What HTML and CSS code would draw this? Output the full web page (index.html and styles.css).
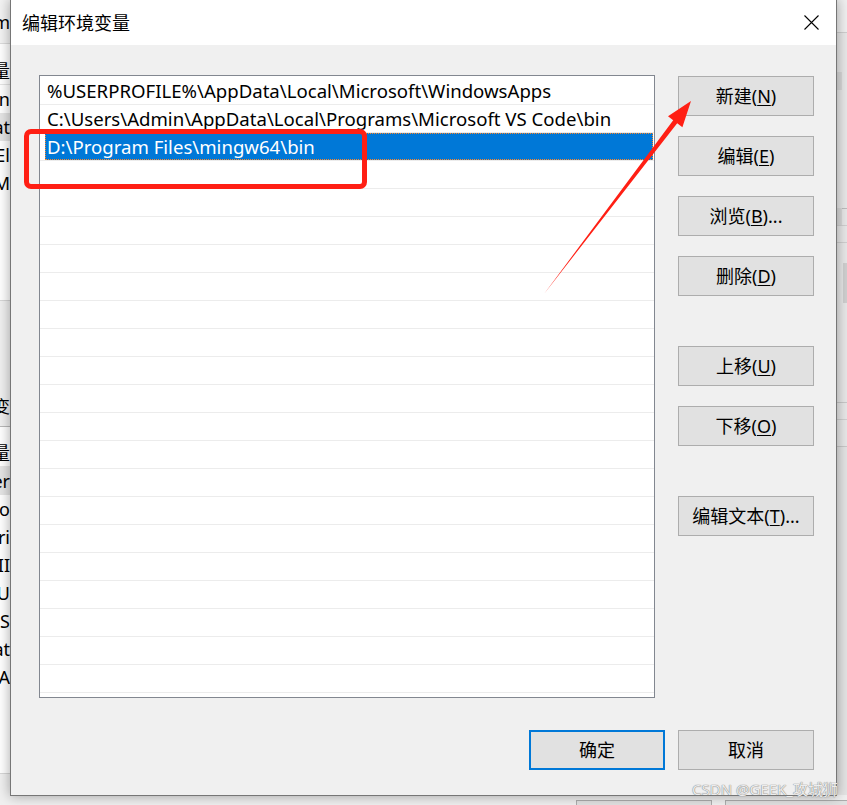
FILE: index.html
```html
<!DOCTYPE html>
<html lang="zh-CN">
<head>
<meta charset="utf-8">
<title>编辑环境变量</title>
<link rel="stylesheet" href="styles.css">
</head>
<body>
<div class="desktop">
  <div class="bg-left">
    <div class="bl-top r">m</div>
    <div class="bl-gap1"></div>
    <div class="r hdr">变量</div>
    <div class="r">On</div>
    <div class="r sel">at</div>
    <div class="r">El</div>
    <div class="r">M</div>
    <div class="bl-white1"></div>
    <div class="bl-grey1"></div>
    <div class="bl-label r">系统变</div>
    <div class="bl-gap2"></div>
    <div class="r hdr">变量</div>
    <div class="r sel">er</div>
    <div class="r">o</div>
    <div class="r">ri</div>
    <div class="r">II</div>
    <div class="r">U</div>
    <div class="r">S</div>
    <div class="r">at</div>
    <div class="r">A</div>
    <div class="bl-white2"></div>
    <div class="bl-bottom"></div>
  </div>
  <div class="bg-mid"></div>
  <div class="bg-right">
    <div class="br-a"></div>
    <div class="br-b"><span class="br-block"></span></div>
    <div class="br-c"><span class="br-block"></span></div>
    <div class="br-line"></div>
    <div class="br-line"></div>
    <div class="br-d"><span class="br-thumb"></span></div>
    <div class="br-line"></div>
    <div class="br-line2"></div>
    <div class="br-e"></div>
  </div>
  <div class="bg-bottom">
    <span class="bg-btn"></span>
    <span class="bg-btn"></span>
  </div>
</div>

<div class="dialog">
  <div class="titlebar">
    <span class="title">编辑环境变量</span>
    <svg class="close" width="15" height="15" viewBox="0 0 15 15"><path d="M0.5 0.5 L14.5 14.5 M14.5 0.5 L0.5 14.5" stroke="#000" stroke-width="1.1" fill="none"/></svg>
  </div>
  <div class="dlg-body">
    <div class="main">
      <div class="list">
        <div class="row"><span class="cell">%USERPROFILE%\AppData\Local\Microsoft\WindowsApps</span></div>
        <div class="row"><span class="cell">C:\Users\Admin\AppData\Local\Programs\Microsoft VS Code\bin</span></div>
        <div class="row"><span class="cell selected">D:\Program Files\mingw64\bin</span></div>
        <div class="row"><span class="cell"></span></div>
        <div class="row"><span class="cell"></span></div>
        <div class="row"><span class="cell"></span></div>
        <div class="row"><span class="cell"></span></div>
        <div class="row"><span class="cell"></span></div>
        <div class="row"><span class="cell"></span></div>
        <div class="row"><span class="cell"></span></div>
        <div class="row"><span class="cell"></span></div>
        <div class="row"><span class="cell"></span></div>
        <div class="row"><span class="cell"></span></div>
        <div class="row"><span class="cell"></span></div>
        <div class="row"><span class="cell"></span></div>
        <div class="row"><span class="cell"></span></div>
        <div class="row"><span class="cell"></span></div>
        <div class="row"><span class="cell"></span></div>
        <div class="row"><span class="cell"></span></div>
        <div class="row"><span class="cell"></span></div>
        <div class="row"><span class="cell"></span></div>
        <div class="row"><span class="cell"></span></div>
      </div>
      <div class="side">
        <button class="btn">新建(<u>N</u>)</button>
        <button class="btn">编辑(<u>E</u>)</button>
        <button class="btn">浏览(<u>B</u>)...</button>
        <button class="btn">删除(<u>D</u>)</button>
        <button class="btn sep">上移(<u>U</u>)</button>
        <button class="btn">下移(<u>O</u>)</button>
        <button class="btn sep">编辑文本(<u>T</u>)...</button>
      </div>
    </div>
    <div class="footer">
      <button class="btn primary">确定</button>
      <button class="btn">取消</button>
    </div>
  </div>
</div>

<div class="mark-rect"></div>
<svg class="arrow" width="847" height="805" viewBox="0 0 847 805">
  <polygon points="544,294 673.2,120.2 668,116.2 691,101 682.4,127.2 677.2,123.2" fill="#ff1f14"/>
</svg>
<div class="watermark">CSDN @GEEK_攻城狮</div>
</body>
</html>
```

FILE: styles.css
```css
* { box-sizing: border-box; }

html, body {
  margin: 0;
  padding: 0;
}

body {
  width: 847px;
  height: 805px;
  overflow: hidden;
  position: relative;
  background: #f0f0f0;
  font-family: "Microsoft YaHei UI", "Segoe UI", "Noto Sans", "Noto Sans CJK SC", sans-serif;
  color: #000;
}

/* ---------- underlying window ---------- */
.desktop {
  display: grid;
  grid-template-columns: 10px 1fr 11px;
  grid-template-rows: 795px 10px;
  height: 805px;
  background: #f0f0f0;
}

.bg-left {
  grid-row: 1 / 3;
  grid-column: 1;
  display: flex;
  flex-direction: column;
  overflow: hidden;
  font-size: 18px;
  background: #fff;
}

.bg-left .r {
  height: 28px;
  flex: none;
  display: flex;
  justify-content: flex-end;
  align-items: center;
  white-space: nowrap;
  overflow: hidden;
  line-height: 1;
}

.bg-left .sel { background: #e5e5e5; }
.bg-left .hdr { border-bottom: 1px solid #e5e5e5; }

.bg-left .bl-top { height: 44px; background: #f3f3f3; border-bottom: 1px solid #dcdcdc; }
.bl-gap1 { height: 13px; flex: none; }
.bl-white1 { height: 103px; flex: none; }
.bl-grey1 { height: 87px; flex: none; background: #f0f0f0; border-top: 1px solid #d6d6d6; }
.bg-left .bl-label { height: 40px; background: #f0f0f0; font-size: 17px; border-bottom: 1px solid #b9b9b9; }
.bl-gap2 { height: 12px; flex: none; }
.bl-white2 { height: 82px; flex: none; }
.bl-bottom { height: 32px; flex: none; background: #f0f0f0; border-top: 1px solid #d6d6d6; }

.bg-mid { grid-row: 1; grid-column: 2; }

.bg-right {
  grid-row: 1;
  grid-column: 3;
  display: flex;
  flex-direction: column;
  background: #e8e8e8;
}
.br-a { height: 33px; background: #f0f0f0; border-bottom: 1px solid #cfcfcf; }
.br-b { height: 70px; padding-top: 39px; }
.br-c { height: 92px; padding-top: 105px; border-bottom: 1px solid #bdbdbd; }
.br-block { display: block; width: 6px; height: 18px; background: #d9d9d9; }
.br-line { height: 17px; border-bottom: 1px solid #d0d0d0; }
.br-d { height: 160px; padding: 20px 0 0 7px; border-bottom: 1px solid #c9c9c9; }
.br-thumb { display: block; width: 4px; height: 40px; background: #d0d0d0; }
.br-line2 { height: 27px; border-bottom: 1px solid #c9c9c9; }
.br-e { flex: 1; background: #e4e4e4; }

.bg-bottom {
  grid-row: 2;
  grid-column: 2 / 4;
  display: flex;
  gap: 13px;
  padding: 5px 0 0 566px;
  overflow: hidden;
}
.bg-btn {
  flex: none;
  width: 136px;
  height: 30px;
  border: 1px solid #adadad;
  background: #e1e1e1;
}

/* ---------- dialog ---------- */
.dialog {
  position: absolute;
  left: 10px;
  top: -1px;
  width: 827px;
  border: 1px solid #767676;
  background: #f0f0f0;
  box-shadow: 0 0 12px rgba(0, 0, 0, 0.35);
}

.titlebar {
  height: 45px;
  background: #fff;
  display: flex;
  align-items: center;
  justify-content: space-between;
  padding: 0 17px 0 11px;
}

.title {
  font-size: 18px;
  line-height: 1;
}

.close { display: block; }

.dlg-body {
  padding: 30px 22px 25px 28px;
  display: flex;
  flex-direction: column;
  gap: 32px;
}

.main {
  display: flex;
  gap: 23px;
  align-items: flex-start;
}

.list {
  width: 616px;
  height: 623px;
  border: 1px solid #828790;
  background: #fff;
  padding-top: 1px;
  overflow: hidden;
}

.row {
  height: 28px;
  border-bottom: 1px solid #ececec;
  padding-left: 5px;
  display: flex;
}

.cell {
  flex: 1;
  margin-right: 1px;
  padding-left: 2px;
  font-size: 18.6px;
  line-height: 27px;
  white-space: nowrap;
}

.cell.selected {
  background: #0078d7;
  color: #fff;
  outline: 1px dotted #ff8728;
  outline-offset: -1px;
}

.side {
  width: 136px;
  margin-top: 1px;
  display: flex;
  flex-direction: column;
  gap: 20px;
}

.btn {
  width: 136px;
  height: 40px;
  margin: 0;
  padding: 0;
  border: 1px solid #adadad;
  background: #e1e1e1;
  font-family: inherit;
  font-size: 18px;
  color: #000;
  display: flex;
  align-items: center;
  justify-content: center;
  line-height: 1;
}

.btn u { text-underline-offset: 2px; }

.side .sep { margin-top: 30px; }

.footer {
  display: flex;
  justify-content: flex-end;
  gap: 13px;
}

.btn.primary { border: 2px solid #0078d7; }

/* ---------- annotations ---------- */
.mark-rect {
  position: absolute;
  left: 24px;
  top: 129px;
  width: 343px;
  height: 60px;
  border: 5px solid #ff1f14;
  border-radius: 7px;
}

.arrow {
  position: absolute;
  left: 0;
  top: 0;
  pointer-events: none;
}

.watermark {
  position: absolute;
  left: 692px;
  top: 780px;
  font-size: 15px;
  line-height: 18px;
  color: #ededed;
  text-shadow: 0 0 1px #7a7a7a, 0 0 1px #8a8a8a;
  white-space: nowrap;
}
```
